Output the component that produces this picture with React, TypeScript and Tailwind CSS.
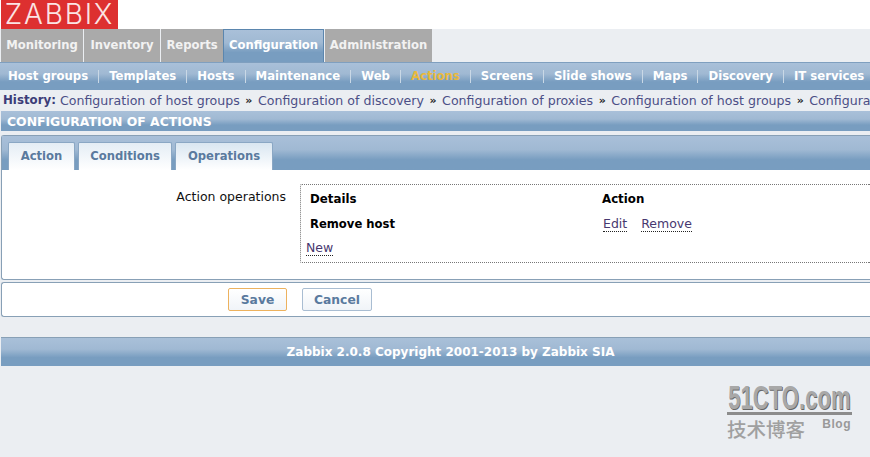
const bar = "bg-linear-to-b from-[#a9c0d9] via-[#a0b9d3] via-40% to-[#789dc0] to-70%";
const mainTabs = [
  { label: "Monitoring", w: "w-[82px] mr-[1px]" },
  { label: "Inventory", w: "w-[76px] mr-[1px]" },
  { label: "Reports", w: "w-[62px]" },
];
const subNav = ["Host groups", "Templates", "Hosts", "Maintenance", "Web", "Actions", "Screens", "Slide shows", "Maps", "Discovery", "IT services"];
const history = ["Configuration of host groups", "Configuration of discovery", "Configuration of proxies", "Configuration of host groups", "Configuration of actions"];

function Dotted({ children }: { children: string }) {
  return <span className="border-b border-dotted border-[#222] leading-[14px] text-[#47386f]">{children}</span>;
}

const tab = "flex h-[28px] items-center justify-center rounded-t-[2px] border border-b-0 border-[#8aa7c4] bg-linear-to-b to-white";

export default function App() {
  return (
    <div className="relative h-[457px] w-[870px] overflow-hidden bg-[#ebeef2] font-['DejaVu_Sans',sans-serif] text-[12px]">
      <div className="h-[29px] bg-white">
        <div className="ml-[1px] flex h-[29px] w-[117px] items-center justify-center bg-[#dd3030] font-['Inter',sans-serif] text-[28px] leading-[29px] font-light tracking-[1.8px] text-[#fbe4e4]">
          ZABBIX
        </div>
      </div>

      <div className="flex h-[33px] pl-[1px] text-[11.6px] font-bold whitespace-nowrap">
        {mainTabs.map((t) => (
          <div key={t.label} className={`${t.w} flex items-center justify-center bg-[#aaaaaa] pt-[1px] text-[#f2f2f2]`}>{t.label}</div>
        ))}
        <div className={`flex w-[101px] items-center justify-center border border-b-0 border-[#5b86ae] text-white ${bar}`}>Configuration</div>
        <div className="ml-[1px] flex w-[107px] items-center justify-center bg-[#aaaaaa] pt-[1px] text-[#f2f2f2]">Administration</div>
      </div>

      <div className={`flex h-[28px] items-center overflow-hidden border-t border-[#7f9fbf] pl-[8px] text-[11.68px] font-bold whitespace-nowrap text-white ${bar}`}>
        {subNav.map((s, i) => (
          <div key={s} className="flex items-center">
            {i > 0 && <span className="mx-[10px] h-[13px] w-px bg-[#c9d8e6]" />}
            <span className={s === "Actions" ? "text-[#e8b93c]" : ""}>{s}</span>
          </div>
        ))}
      </div>

      <div className="flex h-[21px] items-center overflow-hidden pt-[1px] pl-[3px] text-[12.6px] whitespace-nowrap text-[#4b4f86]">
        <span className="mr-[4px] text-[11.8px] font-bold text-[#3c3c78]">History:</span>
        {history.map((h, i) => (
          <span key={i} className="flex items-center">
            {i > 0 && <span className="mx-[5.5px] text-[11px] font-bold text-[#222]">»</span>}
            {h}
          </span>
        ))}
      </div>

      <div className={`ml-[1px] flex h-[20px] items-center pt-[2px] pl-[6px] text-[12.4px] font-bold text-white ${bar}`}>CONFIGURATION OF ACTIONS</div>

      <div className="mt-[4px] ml-[1px] h-[145px] rounded-l-[3px] border border-r-0 border-[#88a0b6] bg-white">
        <div className={`flex h-[34px] items-end gap-[3px] pl-[6px] text-[11.6px] font-bold text-[#5a7a9e] ${bar}`}>
          <div className={`${tab} w-[67px] from-[#e4edf5]`}>Action</div>
          <div className={`${tab} w-[94px] from-[#e4edf5]`}>Conditions</div>
          <div className={`${tab} w-[98px] from-[#d9e6f1]`}>Operations</div>
        </div>
        <div className="flex pt-[14px]">
          <div className="w-[298px] pt-[6px] pr-[14px] text-right text-[12.5px] leading-[14px] text-[#111]">Action operations</div>
          <div className="h-[79px] flex-1 rounded-l-[2px] border border-r-0 border-dotted border-[#777]">
            <div className="flex pt-[6px] pl-[9px] text-[11.8px] font-bold text-black">
              <div className="w-[292px]">Details</div>
              <div>Action</div>
            </div>
            <div className="flex items-start pt-[8px] pl-[9px] text-[12.5px] leading-[15px]">
              <div className="w-[293px] text-[11.6px] font-bold text-black">Remove host</div>
              <div className="flex gap-[14px]"><Dotted>Edit</Dotted><Dotted>Remove</Dotted></div>
            </div>
            <div className="pt-[8px] pl-[5px] text-[12.5px] leading-[15px]"><Dotted>New</Dotted></div>
          </div>
        </div>
      </div>

      <div className="mt-[2px] ml-[1px] flex h-[35px] items-center rounded-l-[3px] border border-r-0 border-[#88a0b6] bg-white pl-[226px] text-[12.3px] font-bold text-[#5a7a9e]">
        <div className="flex h-[23px] w-[59px] items-center justify-center rounded-[2px] border border-[#edb25e] bg-linear-to-b from-white to-[#f0f4f8] pt-[2px]">Save</div>
        <div className="ml-[15px] flex h-[23px] w-[70px] items-center justify-center rounded-[2px] border border-[#a9bdd2] bg-linear-to-b from-white to-[#f0f4f8] pt-[2px]">Cancel</div>
      </div>

      <div className={`mt-[20px] ml-[1px] flex h-[29px] items-center justify-center border-t border-[#88a0b6] pb-[1px] pl-[30px] text-[12px] font-bold text-white ${bar}`}>
        Zabbix 2.0.8 Copyright 2001-2013 by Zabbix SIA
      </div>

      <div className="absolute top-[383px] left-[727px] w-[125px]">
        <div className="flex h-[32px] items-center justify-center border-b-[3px] border-[#8c8c8c] font-['Liberation_Sans',sans-serif] text-[33px] leading-[28px] font-bold whitespace-nowrap text-[#a8a8a8] [text-shadow:1px_1px_0_#666]">
          <span className="inline-block scale-x-[0.67]">51CTO.com</span>
        </div>
        <div className="flex items-start justify-between pt-[2px]">
          <span className="font-['Noto_Sans_CJK_SC',sans-serif] text-[19.5px] leading-[24px] font-medium text-[#a0a0a0]">技术博客</span>
          <span className="pr-[1px] font-['Liberation_Sans',sans-serif] text-[12px] leading-[14px] font-bold tracking-[0.5px] text-[#999]">Blog</span>
        </div>
      </div>
    </div>
  );
}
